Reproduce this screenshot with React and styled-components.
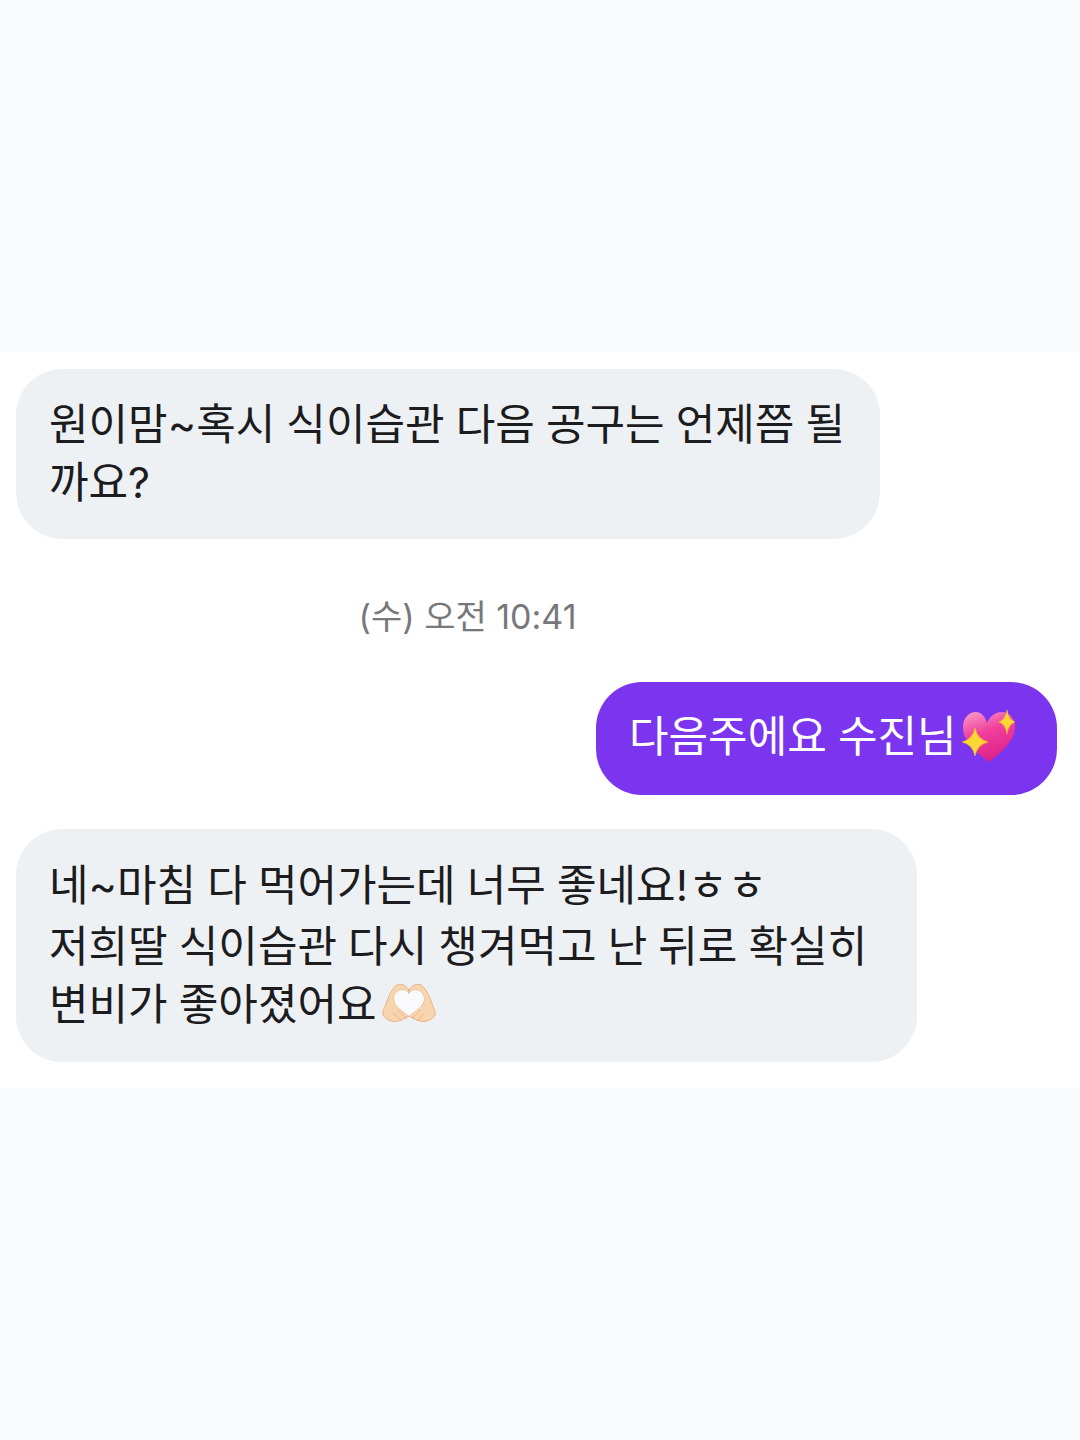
import React from "react";
import styled, { createGlobalStyle } from "styled-components";

const GlobalStyle = createGlobalStyle`
  html, body {
    margin: 0;
    padding: 0;
    background: #ffffff;
  }
  body {
    font-family: Inter, "Noto Sans CJK KR", sans-serif;
  }
`;

const Star = ({ cx, cy, rx, ry }) => (
  <path
    d={`M${cx} ${cy - ry} Q${cx + rx * 0.18} ${cy - ry * 0.18} ${cx + rx} ${cy} Q${cx + rx * 0.18} ${cy + ry * 0.18} ${cx} ${cy + ry} Q${cx - rx * 0.18} ${cy + ry * 0.18} ${cx - rx} ${cy} Q${cx - rx * 0.18} ${cy - ry * 0.18} ${cx} ${cy - ry} Z`}
    fill="#fdd835"
    stroke="#f5b82e"
    strokeWidth="0.6"
  />
);

const SparklingHeart = () => (
  <HeartSvg viewBox="0 0 56 56">
    <defs>
      <linearGradient id="heartFill" x1="0.25" y1="0" x2="0.6" y2="1">
        <stop offset="0" stopColor="#f98fc4" />
        <stop offset="0.4" stopColor="#f0409c" />
        <stop offset="1" stopColor="#dc1f88" />
      </linearGradient>
    </defs>
    <path
      d="M29 54 C21 47 3 37 3 19 C3 10 9 4 16 4 C21 4 25 8 27 15 C30 8 35 4 42 4 C50 4 55 11 55 19 C55 35 37 47 29 54 Z"
      fill="url(#heartFill)"
    />
    <Star cx={15} cy={34} rx={13} ry={14} />
    <Star cx={47} cy={14} rx={8} ry={12} />
  </HeartSvg>
);

const HeartHands = () => (
  <HandsSvg viewBox="0 0 54 38">
    <path
      d="M27 6 C24 2 20 -1 16 0.5 C12 2 8 9 5 17 C3 23 0 28 1 31 C3 35 9 38 14 37.5 C18 37 23 34 27 32 C23 28 12 23 12 15 C12 9 17 6 21 6 C24 6 26 8 27 10 Z"
      fill="#f9d5af"
      stroke="#e3ad7e"
      strokeWidth="0.9"
    />
    <path
      d="M27 6 C30 2 34 -1 38 0.5 C42 2 46 9 49 17 C51 23 54 28 53 31 C51 35 45 38 40 37.5 C36 37 31 34 27 32 C31 28 42 23 42 15 C42 9 37 6 33 6 C30 6 28 8 27 10 Z"
      fill="#f9d5af"
      stroke="#e3ad7e"
      strokeWidth="0.9"
    />
    <path
      d="M27 10 C26 8 24 6 21 6 C17 6 12 9 12 15 C12 23 23 28 27 32 C31 28 42 23 42 15 C42 9 37 6 33 6 C30 6 28 8 27 10 Z"
      fill="#f8fafb"
    />
    <path
      d="M15 26 C19 29 22 32 24 35 M11 29 C14 31 17 34 19 37 M39 26 C35 29 32 32 30 35 M43 29 C40 31 37 34 35 37"
      fill="none"
      stroke="#e3ad7e"
      strokeWidth="0.8"
    />
  </HandsSvg>
);

const App = () => {
  return (
    <Page>
      <GlobalStyle />
      <TopBand />
      <Chat>
        <Bubble $width={864} $height={170}>
          <Line>원이맘~혹시 식이습관 다음 공구는 언제쯤 될</Line>
          <Line>까요?</Line>
        </Bubble>
        <Stamp>(수) 오전 10:41</Stamp>
        <Bubble $mine $width={461} $height={113}>
          <Line>
            다음주에요 수진님
            <SparklingHeart />
          </Line>
        </Bubble>
        <Bubble $width={901} $height={233}>
          <Line $first>네~마침 다 먹어가는데 너무 좋네요!ㅎㅎ</Line>
          <Line>저희딸 식이습관 다시 챙겨먹고 난 뒤로 확실히</Line>
          <Line>
            변비가 좋아졌어요
            <HeartHands />
          </Line>
        </Bubble>
      </Chat>
      <BottomBand />
    </Page>
  );
};

const Page = styled.div`
  display: flex;
  flex-direction: column;
  width: 1080px;
  height: 1440px;
  overflow: hidden;
  background: #ffffff;
`;
const TopBand = styled.div`
  height: 352px;
  background: #fafbfd;
`;
const BottomBand = styled.div`
  flex: 1;
  background: #fafbfd;
`;
const Chat = styled.div`
  display: flex;
  flex-direction: column;
  height: 736px;
  padding: 17px 23px 0 16px;
  box-sizing: border-box;
`;
const Bubble = styled.div`
  display: flex;
  flex-direction: column;
  justify-content: center;
  box-sizing: border-box;
  width: ${(p) => p.$width}px;
  height: ${(p) => p.$height}px;
  padding: 0 0 ${(p) => (p.$mine ? 11 : 9)}px 33px;
  margin-bottom: ${(p) => (p.$mine ? 34 : 0)}px;
  align-self: ${(p) => (p.$mine ? "flex-end" : "flex-start")};
  border-radius: 46px;
  background: ${(p) => (p.$mine ? "#7b35ef" : "#eef1f4")};
  color: ${(p) => (p.$mine ? "#ffffff" : "#1c1c1e")};
  font-size: 43px;
  font-weight: 400;
  word-spacing: -1px;
`;
const Line = styled.div`
  display: flex;
  align-items: center;
  height: 58px;
  margin-bottom: ${(p) => (p.$first ? 3 : 0)}px;
  white-space: pre;
`;
const Stamp = styled.div`
  align-self: center;
  margin: 56px 0 43px -138px;
  line-height: 44px;
  color: #77787c;
  font-size: 34px;
  font-weight: 400;
`;
const HeartSvg = styled.svg`
  width: 56px;
  height: 56px;
  flex: none;
  margin: 6px 0 0 3px;
`;
const HandsSvg = styled.svg`
  width: 54px;
  height: 38px;
  flex: none;
  margin: 4px 0 0 5px;
`;

export default App;
